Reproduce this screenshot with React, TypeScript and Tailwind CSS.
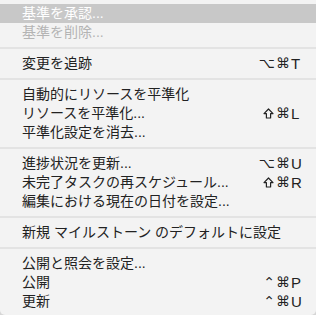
import React from 'react'

type Item =
  | { kind: 'sep' }
  | { kind: 'item'; label: string; mods?: string; shift?: boolean; keyChar?: string; active?: boolean; disabled?: boolean }

const items: Item[] = [
  { kind: 'item', label: '基準を承認...', active: true },
  { kind: 'item', label: '基準を削除...', disabled: true },
  { kind: 'sep' },
  { kind: 'item', label: '変更を追跡', mods: '⌥⌘', keyChar: 'T' },
  { kind: 'sep' },
  { kind: 'item', label: '自動的にリソースを平準化' },
  { kind: 'item', label: 'リソースを平準化...', shift: true, mods: '⌘', keyChar: 'L' },
  { kind: 'item', label: '平準化設定を消去...' },
  { kind: 'sep' },
  { kind: 'item', label: '進捗状況を更新...', mods: '⌥⌘', keyChar: 'U' },
  { kind: 'item', label: '未完了タスクの再スケジュール...', shift: true, mods: '⌘', keyChar: 'R' },
  { kind: 'item', label: '編集における現在の日付を設定...' },
  { kind: 'sep' },
  { kind: 'item', label: '新規 マイルストーン のデフォルトに設定' },
  { kind: 'sep' },
  { kind: 'item', label: '公開と照会を設定...' },
  { kind: 'item', label: '公開', mods: '⌃⌘', keyChar: 'P' },
  { kind: 'item', label: '更新', mods: '⌃⌘', keyChar: 'U' },
]

function ShiftIcon() {
  return (
    <svg width="11" height="11" viewBox="0 0 11 11" className="mr-[2px]">
      <path
        d="M5.5 1 L10 5.6 H7.6 V10 H3.4 V5.6 H1 Z"
        fill="none"
        stroke="#222222"
        strokeWidth="1.2"
        strokeLinejoin="round"
      />
    </svg>
  )
}

export default function App() {
  return (
    <div className="w-[316px] h-[315px] bg-[#d6d6d6]">
      <div
        className="w-[316px] h-[315px] bg-[#f3f3f3] rounded-b-[5px] pt-[4px] pb-[4px] flex flex-col text-[14px]"
        style={{ fontFamily: '"Liberation Sans", "Noto Sans CJK JP", sans-serif' }}
      >
        {items.map((it, i) =>
          it.kind === 'sep' ? (
            <div key={i} className="h-[12px] flex items-center">
              <div className="w-full h-[2px] bg-[#e3e3e3]" />
            </div>
          ) : (
            <div
              key={i}
              className={
                'h-[19px] leading-[19px] flex items-center pl-[22px] pr-[13px] ' +
                (it.active ? 'bg-[#c8c8c8] text-white' : it.disabled ? 'text-[#b4b4b4]' : 'text-[#222222]')
              }
            >
              <span className="flex-1 whitespace-nowrap">{it.label}</span>
              {it.keyChar && (
                <span className="flex items-center whitespace-nowrap text-[15px]">
                  {it.shift && <ShiftIcon />}
                  <span
                    className="text-right tracking-[1px] text-[14px]"
                    style={{ fontFamily: '"DejaVu Sans", sans-serif' }}
                  >
                    {it.mods}
                  </span>
                  <span
                    className="w-[12px] text-left"
                    style={{ fontFamily: '"Liberation Sans", sans-serif' }}
                  >
                    {it.keyChar}
                  </span>
                </span>
              )}
            </div>
          )
        )}
      </div>
    </div>
  )
}
